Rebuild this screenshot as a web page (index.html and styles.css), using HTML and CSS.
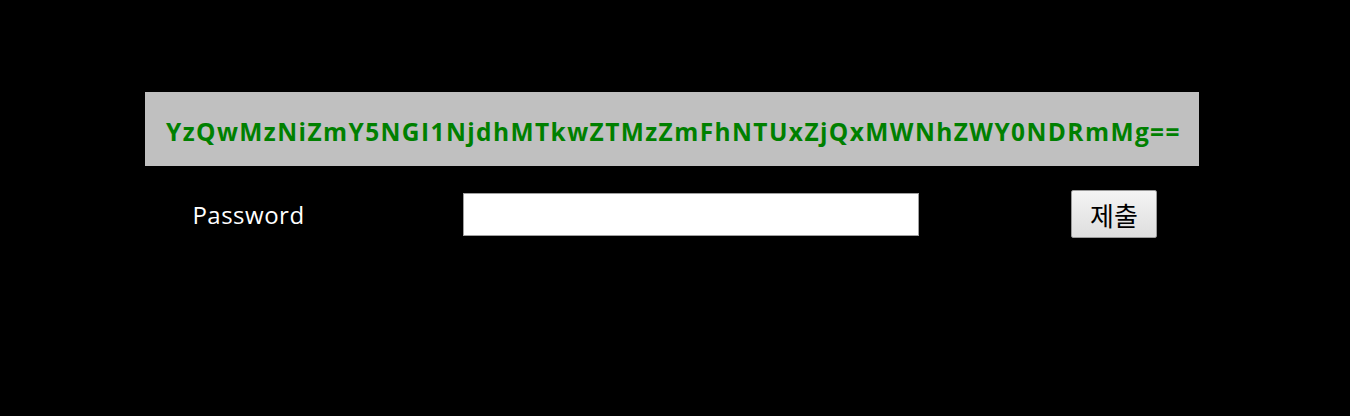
FILE: index.html
```html
<!DOCTYPE html>
<html lang="ko">
<head>
<meta charset="utf-8">
<title>Password</title>
<link rel="stylesheet" href="styles.css">
</head>
<body>
<div class="wrap">
  <div class="banner"><span class="code">YzQwMzNiZmY5NGI1NjdhMTkwZTMzZmFhNTUxZjQxMWNhZWY0NDRmMg==</span></div>
  <form class="row">
    <div class="cell label">Password</div>
    <div class="cell"><input class="field" type="password"></div>
    <div class="cell"><button class="submit" type="button">제출</button></div>
  </form>
</div>
</body>
</html>
```
FILE: styles.css
```css
html, body {
  margin: 0;
  padding: 0;
  background: #000;
  width: 1350px;
  height: 416px;
  overflow: hidden;
}
body {
  font-family: "Open Sans", "Noto Sans", "Noto Sans CJK KR", sans-serif;
}
.wrap {
  margin-left: 145px;
  width: 1054px;
  padding-top: 92px;
}
.banner {
  height: 74px;
  background: #c0c0c0;
  display: flex;
  align-items: center;
  justify-content: center;
}
.code {
  color: #008000;
  font-weight: 700;
  font-size: 24.5px;
  letter-spacing: 1.4px;
  margin-left: 3px;
  position: relative;
  top: 2px;
}
.row {
  display: grid;
  grid-template-columns: 207px 677px 170px;
  align-items: center;
  height: 96px;
}
.cell {
  display: flex;
  justify-content: center;
  align-items: center;
}
.label {
  color: #fff;
  font-size: 24px;
  letter-spacing: 0.5px;
}
.field {
  box-sizing: border-box;
  width: 456px;
  height: 43px;
  background: #fff;
  border: 1px solid #a0a0a0;
  margin: 0;
}
.submit {
  box-sizing: border-box;
  width: 86px;
  height: 48px;
  background: linear-gradient(#f4f4f4, #dedede);
  border: 1px solid #9a9a9a;
  border-radius: 2px;
  font-family: "Noto Sans CJK KR", sans-serif;
  font-size: 26px;
  color: #000;
  padding: 0;
  margin: 0;
}
```
